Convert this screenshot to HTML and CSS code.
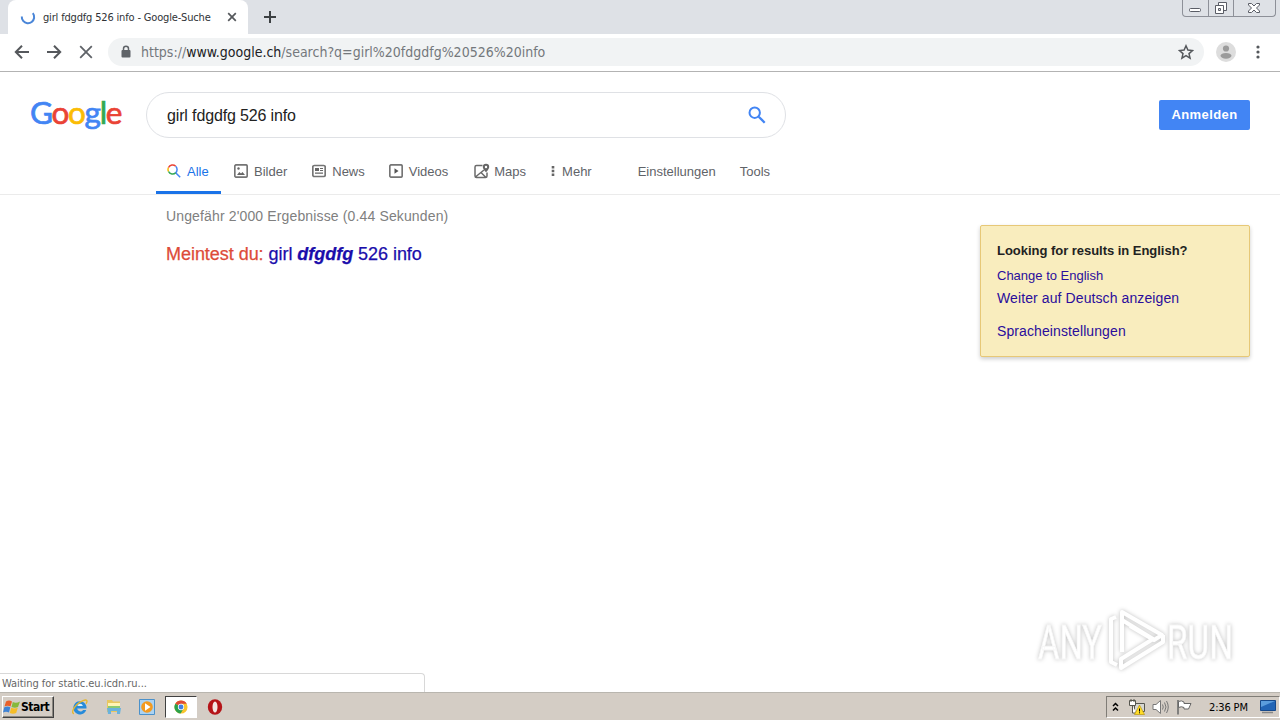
FILE: index.html
```html
<!DOCTYPE html>
<html lang="de">
<head>
	<meta charset="utf-8">
	<meta name="viewport" content="width=device-width, initial-scale=1">
	<title>girl fdgdfg 526 info - Google-Suche</title>
	<link rel="stylesheet" href="styles.css">
</head>
<body>
<!-- browser tabs and window buttons -->
<div class="tabstrip">
	<div class="tab">
		<svg class="spinner" viewBox="0 0 16 16" width="16" height="16"><path d="M1.800 7.500a6.200 6.200 0 0 0 12.300 1.500q.300-2.800-1.300-4.800" fill="none" stroke="#4a86d8" stroke-width="2"/></svg>
		<span class="tab-title">girl fdgdfg 526 info - Google-Suche</span>
		<svg class="tab-close" viewBox="0 0 10 10" width="10" height="10"><path d="M1.2 1.2l7.6 7.6M8.8 1.2l-7.6 7.6" stroke="#55585c" stroke-width="1.7"/></svg>
	</div>
	<svg class="new-tab" viewBox="0 0 14 14" width="14" height="14"><path d="M7 1v12M1 7h12" stroke="#3c4043" stroke-width="2"/></svg>
	<div class="window-buttons">
		<span><svg viewBox="0 0 24 16" width="24" height="16"><rect x="6.5" y="8.5" width="11" height="3" rx="1" fill="#fff" stroke="#5a5d66"/></svg></span>
		<span><svg viewBox="0 0 24 16" width="24" height="16"><path d="M9.500 2.500h8v8h-8z" fill="#fff" stroke="#5a5d66"/><path d="M6.500 5.500h8v8h-8z" fill="#fff" stroke="#5a5d66"/><path d="M9.500 8.500h2v2h-2z" fill="#dee1e6" stroke="#5a5d66"/></svg></span>
		<span class="wide"><svg viewBox="0 0 40 16" width="40" height="16"><path d="M14.500 3.500h3l2.500 2.500 2.500-2.500h3v1.500l-3 3 3 3v1.500h-3l-2.500-2.500-2.500 2.500h-3v-1.500l3-3-3-3z" fill="#fff" stroke="#5a5d66"/></svg></span>
	</div>
</div>

<div class="toolbar">
	<svg class="nav-icon" viewBox="0 0 16 16" width="16" height="16"><path d="M15 8H2.500M8 1.800L1.800 8 8 14.200" fill="none" stroke="#55585c" stroke-width="2"/></svg>
	<svg class="nav-icon" viewBox="0 0 16 16" width="16" height="16"><path d="M1 8h12.500M8 1.800L14.200 8 8 14.200" fill="none" stroke="#55585c" stroke-width="2"/></svg>
	<svg class="nav-icon" viewBox="0 0 16 16" width="16" height="16"><path d="M2.200 2.200l11.600 11.600M13.800 2.200L2.200 13.800" stroke="#5f6368" stroke-width="1.800"/></svg>
	<div class="omnibox">
		<svg class="lock" viewBox="0 0 10 14" width="10" height="14"><path d="M2.500 6V3.700a2.500 2.500 0 0 1 5 0V6" fill="none" stroke="#5f6368" stroke-width="1.500"/><rect x="0.500" y="5" width="9" height="7.500" rx="1" fill="#5f6368"/></svg>
		<span class="url"><span>https://</span><b>www.google.ch</b><span class="path">/search?q=girl%20fdgdfg%20526%20info</span></span>
		<svg class="star" viewBox="0 0 16 16" width="16" height="16"><path d="M8 1.800l1.900 4.300 4.600.4-3.500 3.100 1.050 4.500L8 11.700l-4.050 2.400L5 9.600 1.500 6.500l4.600-.4z" fill="none" stroke="#55585c" stroke-width="1.500"/></svg>
	</div>
	<svg class="avatar" viewBox="0 0 20 20" width="20" height="20"><circle cx="10" cy="10" r="10" fill="#dddddd"/><circle cx="10" cy="6.500" r="3.100" fill="#9b9b9b"/><ellipse cx="10" cy="13.800" rx="5.500" ry="2.900" fill="#9b9b9b"/></svg>
	<svg class="menu" viewBox="0 0 4 14" width="4" height="14"><g fill="#55585c"><circle cx="2" cy="2" r="1.600"/><circle cx="2" cy="7" r="1.600"/><circle cx="2" cy="12" r="1.600"/></g></svg>
</div>

<!-- search page -->
<header class="search-header">
	<div class="logo"><span class="blue">G</span><span class="red">o</span><span class="yellow">o</span><span class="blue">g</span><span class="green">l</span><span class="red">e</span></div>
	<div class="search-box">
		<span class="query">girl fdgdfg 526 info</span>
		<svg viewBox="0 0 18 18" width="18" height="18"><circle cx="6.700" cy="6.700" r="5.200" fill="none" stroke="#4285f4" stroke-width="2"/><path d="M10.700 10.700l6 6" stroke="#4285f4" stroke-width="2.300"/></svg>
	</div>
	<div class="login">Anmelden</div>
</header>

<nav class="tabs">
	<div class="item active">
		<svg viewBox="0 0 14 14" width="14" height="14"><g fill="none" stroke-width="1.500"><path d="M1.500 7.500A4.500 4.500 0 0 1 1.500 3.500" stroke="#fbbc05"/><path d="M1.500 3.500A4.500 4.500 0 0 1 8.700 2.200" stroke="#ea4335"/><path d="M8.700 2.200A4.500 4.500 0 0 1 8.700 8.700L13.200 13.200" stroke="#4285f4"/><path d="M8.700 8.700A4.500 4.500 0 0 1 1.500 7.500" stroke="#34a853"/></g></svg>
		<span>Alle</span>
	</div>
	<div class="item">
		<svg viewBox="0 0 14 14" width="14" height="14"><rect x="0.800" y="0.800" width="12.400" height="12.400" rx="1.500" fill="none" stroke="#757575" stroke-width="1.700"/><path d="M3 11l2.300-3 1.700 1.500L8.500 8 11 11z" fill="#666"/><circle cx="4.500" cy="4.500" r="1.200" fill="#666"/></svg>
		<span>Bilder</span>
	</div>
	<div class="item">
		<svg viewBox="0 0 14 14" width="14" height="14"><rect x="0.800" y="1.500" width="12.400" height="11" rx="1.500" fill="none" stroke="#757575" stroke-width="1.700"/><path d="M3 4h4v3H3zM8 4h3v1H8zM8 6h3v1H8zM3 8.500h8v1.200H3z" fill="#666"/></svg>
		<span>News</span>
	</div>
	<div class="item videos">
		<svg viewBox="0 0 14 14" width="14" height="14"><rect x="0.800" y="0.800" width="12.400" height="12.400" rx="1.500" fill="none" stroke="#757575" stroke-width="1.700"/><path d="M5.500 4.200L9.500 7l-4 2.800z" fill="#555"/></svg>
		<span>Videos</span>
	</div>
	<div class="item">
		<svg class="maps" viewBox="0 0 16 16" width="16" height="16"><path d="M8.500 2.500h-6a1.500 1.500 0 0 0-1.500 1.500v9a1.500 1.500 0 0 0 1.500 1.500h9a1.500 1.500 0 0 0 1.500-1.500V9.500M2 13.500l8-6.500M7 9.500l4.500 4.500" fill="none" stroke="#6b6b6b" stroke-width="1.500"/><path d="M12 .8a3.200 3.200 0 0 1 3.200 3.200c0 2.200-3.200 5.200-3.200 5.200S8.800 6.200 8.800 4A3.200 3.200 0 0 1 12 .8z" fill="#666"/><circle cx="12" cy="4" r="1.200" fill="#fff"/></svg>
		<span>Maps</span>
	</div>
	<div class="item more">
		<svg viewBox="0 0 4 12" width="4" height="12"><path d="M.700 1h2.600v2.400H.700zM.700 4.800h2.600v2.400H.700zM.700 8.600h2.600V11H.700z" fill="#666"/></svg>
		<span>Mehr</span>
	</div>
	<div class="item settings"><span>Einstellungen</span></div>
	<div class="item tools"><span>Tools</span></div>
</nav>

<main class="results">
	<section>
		<p class="stats">Ungefähr 2'000 Ergebnisse (0.44 Sekunden)</p>
		<p class="spell"><span>Meintest du:</span> <a>girl <b>dfgdfg</b> 526 info</a></p>
	</section>
	<aside class="language">
		<h2>Looking for results in English?</h2>
		<a class="change">Change to English</a>
		<a class="keep">Weiter auf Deutsch anzeigen</a>
		<a class="prefs">Spracheinstellungen</a>
	</aside>
</main>

<!-- overlays: watermark and the loading status -->
<svg class="watermark" viewBox="0 0 256 80" width="256" height="80">
	<g font-family="Roboto" font-size="49" fill="#fff" stroke="#f7f7f7" stroke-width="0.800">
		<text x="18" y="59" textLength="64" lengthAdjust="spacingAndGlyphs">ANY</text>
		<text x="147" y="59" textLength="66" lengthAdjust="spacingAndGlyphs">RUN</text>
	</g>
	<g fill="none" stroke="#fff" stroke-width="4" stroke-linejoin="round">
		<path d="M102 52V12l40 23-8 5-24-14M96 17l-5 2v43l6 3M102 52v-32l31 19-32 20v9l42-26v-7"/>
	</g>
</svg>
<div class="status">Waiting for static.eu.icdn.ru...</div>

<footer class="taskbar">
	<div class="start">
		<svg viewBox="0 0 18 16" width="18" height="16"><path d="M3 2.500Q6 .500 9 2.500L7.500 7.500Q4.500 6 1.500 7.500z" fill="#e9602a"/><path d="M9.800 3Q13 4.600 17 2.500L15 8Q12 9.500 8.500 8z" fill="#86b93b"/><path d="M1.300 8.300Q4.500 6.700 7.300 8.300L6 13.500Q3 12 0 13.500z" fill="#3f83d5"/><path d="M8.200 8.800Q11.500 10.300 14.800 8.800L13.200 14Q10 15.500 6.800 14z" fill="#f6bd27"/></svg>
		<b>Start</b>
	</div>
	<div class="quick"><svg viewBox="0 0 16 16" width="16" height="16"><path d="M14.500 9.500H5.200a3.200 3.200 0 0 0 5.900 1.400h3.100A6.600 6.600 0 1 1 14.500 9.500z" fill="#278bda"/><path d="M5.300 7h5.600A2.900 2.900 0 0 0 5.300 7z" fill="#d9f0ff"/><path d="M2 14.500C-.500 14.500.500 10 4.500 6S14.500-.500 15 2c.200 1-.500 2-1 2.800" fill="none" stroke="#e5b72f" stroke-width="1.300"/></svg></div>
	<div class="quick"><svg viewBox="0 0 16 16" width="16" height="16"><path d="M1 1h5l1 1.500h7V13H1z" fill="#e8c75f"/><path d="M2 4h12v6H2z" fill="#fff4b5"/><path d="M2 7h12v3H2z" fill="#8cca72"/><path d="M1 9h14l-1 6h-3v-3H5v3H2z" fill="#69b2dd"/></svg></div>
	<div class="quick"><svg viewBox="0 0 16 16" width="16" height="16"><path d="M.500.500h15v15H.500z" fill="#abd2f2" stroke="#4b91ca"/><circle cx="8" cy="8" r="5.800" fill="#f39a20"/><path d="M6 4.300L11.500 8 6 11.700z" fill="#fff"/></svg></div>
	<div class="quick pressed"><svg viewBox="0 0 16 16" width="14" height="14"><circle cx="8" cy="8" r="7.500" fill="#f9c52d"/><path d="M8 8L1.500 4.200A7.500 7.500 0 0 1 14.500 4.200H8z" fill="#df4a36"/><path d="M8 8L1.500 4.200A7.500 7.500 0 0 0 7.500 15.500L11 9.800z" fill="#2ba14b"/><circle cx="8" cy="8" r="3.600" fill="#fff"/><circle cx="8" cy="8" r="2.800" fill="#427fe1"/></svg></div>
	<div class="quick"><svg viewBox="0 0 16 16" width="16" height="16"><ellipse cx="8" cy="8" rx="7.200" ry="7.800" fill="#b51418"/><ellipse cx="8" cy="8" rx="2.500" ry="5.500" fill="#f3e7e3"/></svg></div>
	<div class="tray">
		<svg class="chevrons" viewBox="0 0 7 10" width="7" height="10"><path d="M1 4l2.500-2.500L6 4M1 8.500L3.500 6 6 8.500" fill="none" stroke="#000" stroke-width="1.500"/></svg>
		<svg class="network" viewBox="0 0 16 16" width="16" height="16"><path d="M5.500 4.500h10v8h-10z" fill="#d7d7d2" stroke="#56564f"/><path d="M.500 1.500h6v5h-6zM3.500 6.500V14h4M2 0v3M5 0v3" fill="#fff" stroke="#56564f"/><path d="M10.500 6l5 9.500h-10z" fill="#ffdc28" stroke="#b28d00" stroke-width=".600"/><path d="M10.500 9.500v3M10.500 13.300v1" stroke="#000"/></svg>
		<svg class="sound" viewBox="0 0 17 16" width="17" height="16"><path d="M1 5.500h3L8.500 1.500v13L4 10.500H1z" fill="#fff" stroke="#777"/><path d="M10.500 5.500q1.500 2.500 0 5M12.500 3.500q3 4.500 0 9M14.500 2q3.500 6 0 12" fill="none" stroke="#777"/></svg>
		<svg class="flag" viewBox="0 0 17 16" width="17" height="16"><path d="M2 1v14.500" stroke="#666" stroke-width="1.500"/><path d="M2.500 2.500q3-1.500 5.500.500v1.500h7L12.500 10H8V8.500q-2.500-1.500-5.500 0z" fill="#fff" stroke="#666"/></svg>
		<span class="clock">2:36 PM</span>
		<svg class="desktop" viewBox="0 0 16 14" width="16" height="14"><path d="M.500.500h15v10H.500z" fill="#2265b6" stroke="#16498b"/><path d="M1 1h14L1 7z" fill="#5b9ddd"/><path d="M2 12.500h11" stroke="#888" stroke-width="1.500"/></svg>
	</div>
</footer>
</body>
</html>
```
FILE: styles.css
```css
* {
  box-sizing: border-box;
  padding: 0;
  margin: 0;
}
body {
  width: 1280px;
  height: 720px;
  overflow: hidden;
  position: relative;
  display: flex;
  flex-direction: column;
  background: #fff;
  color: #222;
  font-family: "Liberation Sans", Arial, sans-serif;
  white-space: nowrap;
}
svg {
  display: block;
  flex: none;
}

/* browser */
.tabstrip {
  height: 34px;
  flex: none;
  display: flex;
  padding-left: 8px;
  background: #dee1e6;
}
.tab {
  width: 240px;
  height: 34px;
  display: flex;
  align-items: center;
  padding: 0 11px 0 12px;
  border-radius: 8px 8px 0 0;
  background: #fff;
}
.tab-title {
  margin-left: 7px;
  color: #303236;
  font: 11px "DejaVu Sans Condensed", "DejaVu Sans", sans-serif;
  letter-spacing: -0.17px;
}
.tab-close {
  margin-left: auto;
}
.new-tab {
  margin: 10px 0 0 15px;
}
.window-buttons {
  height: 17px;
  display: flex;
  margin-left: auto;
  margin-right: 4px;
  border: 1px solid #8d9098;
  border-top: 0;
  border-radius: 0 0 4px 4px;
}
.window-buttons span {
  width: 25px;
}
.window-buttons span + span {
  border-left: 1px solid #8d9098;
}
.window-buttons .wide {
  width: 42px;
}
.toolbar {
  height: 38px;
  flex: none;
  display: flex;
  align-items: center;
  padding: 0 20px 2px 14px;
  border-bottom: 1px solid #b3b3b3;
}
.nav-icon {
  margin-right: 16px;
}
.omnibox {
  width: 1096px;
  height: 28px;
  display: flex;
  align-items: center;
  margin-left: -2px;
  padding: 0 10px 0 13px;
  border-radius: 14px;
  background: #f1f3f4;
}
.url {
  margin-left: 10px;
  color: #74787c;
  font: 14px "DejaVu Sans Condensed", "DejaVu Sans", sans-serif;
  letter-spacing: 0;
}
.url b {
  color: #202124;
  font-weight: normal;
}
.star {
  margin-left: auto;
}
.avatar {
  margin-left: 12px;
}
.menu {
  margin-left: auto;
}

/* search header */
.search-header {
  height: 78px;
  flex: none;
  display: flex;
  align-items: flex-start;
  padding: 20px 30px 0;
}
.logo {
  width: 116px;
  font: 31.5px/40px Lato, sans-serif;
  letter-spacing: -1.3px;
  -webkit-text-stroke: 0.7px currentColor;
}
.blue { color: #4285f4; }
.red { color: #ea4335; }
.yellow { color: #fbbc05; }
.green { color: #34a853; }
.search-box {
  width: 640px;
  height: 46px;
  display: flex;
  align-items: center;
  justify-content: space-between;
  padding: 0 19px 0 20px;
  border: 1px solid #dfe1e5;
  border-radius: 23px;
}
.query {
  padding-top: 2px;
  font-size: 16px;
  letter-spacing: -0.14px;
}
.login {
  width: 91px;
  height: 30px;
  margin: 8px 0 0 auto;
  border-radius: 2px;
  background: #4285f4;
  color: #fff;
  font: bold 13px/30px "Liberation Sans", Arial, sans-serif;
  letter-spacing: 0.4px;
  text-align: center;
}
.tabs {
  height: 45px;
  flex: none;
  display: flex;
  padding-left: 156px;
  border-bottom: 1px solid #ebebeb;
  color: #5f6368;
  font-size: 13px;
}
.item {
  height: 44px;
  display: flex;
  align-items: center;
  gap: 6px;
  padding: 0 0 2px 13px;
}
.item + .item {
  padding-right: 12px;
}
.item.active {
  width: 65px;
  padding: 1px 0 0 11px;
  border-bottom: 3px solid #1a73e8;
  color: #1a73e8;
}
.item.videos {
  margin-left: -1px;
  padding-right: 13px;
}
.maps {
  margin-right: -2px;
}
.item.more {
  gap: 7px;
}
.item.settings {
  padding-left: 34px;
}
.item.tools {
  padding-left: 12px;
}

/* results */
.results {
  flex: 1;
  display: flex;
  justify-content: space-between;
  align-items: flex-start;
  padding: 0 30px 0 166px;
}
.stats {
  margin-top: 13px;
  color: #808080;
  font-size: 14px;
  line-height: 17px;
  letter-spacing: 0.14px;
}
.spell {
  margin-top: 18px;
  font-size: 18px;
  line-height: 22px;
  letter-spacing: -0.04px;
  -webkit-text-stroke: 0.25px currentColor;
}
.spell span {
  color: #dd4b39;
}
.spell a {
  color: #1a0dab;
}
.spell b {
  font-style: italic;
}
.language {
  width: 270px;
  height: 132px;
  display: flex;
  flex-direction: column;
  margin-top: 30px;
  padding: 16px 16px 0;
  border: 1px solid #e7c877;
  border-radius: 2px;
  background: #f9edbe;
  box-shadow: 0 2px 4px rgba(0, 0, 0, 0.2);
  color: #2a0d9c;
  font-size: 14px;
  line-height: 17px;
}
.language h2 {
  color: #222;
  font-size: 13px;
  line-height: 17px;
  letter-spacing: -0.03px;
}
.change {
  margin-top: 8px;
  font-size: 13px;
}
.keep {
  margin-top: 6px;
  letter-spacing: 0.1px;
}
.prefs {
  margin-top: 16px;
  letter-spacing: 0.1px;
}

/* overlays */
.watermark {
  position: absolute;
  top: 600px;
  left: 1020px;
  filter: drop-shadow(0 0 2px rgba(0, 0, 0, 0.25));
}
.status {
  position: absolute;
  left: 0;
  bottom: 28px;
  width: 425px;
  height: 19px;
  padding-left: 2px;
  border: 1px solid #d8d8d8;
  border-left: 0;
  border-bottom: 0;
  border-radius: 0 4px 0 0;
  background: #fff;
  color: #666;
  font: 11px/20px "DejaVu Sans Condensed", "DejaVu Sans", sans-serif;
  letter-spacing: -0.05px;
}

/* taskbar */
.taskbar {
  height: 28px;
  flex: none;
  display: flex;
  align-items: center;
  border-top: 1px solid #b9b6af;
  background: #d4cdc5;
  color: #000;
  font: 11px "DejaVu Sans Condensed", "DejaVu Sans", sans-serif;
}
.start {
  width: 52px;
  height: 22px;
  display: flex;
  align-items: center;
  margin: 1px 10px 0 2px;
  border: 1px solid;
  border-color: #fff #404040 #404040 #fff;
  box-shadow: inset -1px -1px #8b8780;
}
.start b {
  font-size: 12px;
  letter-spacing: -0.5px;
}
.quick {
  width: 32px;
  height: 22px;
  display: flex;
  align-items: center;
  justify-content: center;
  margin-right: 1.7px;
}
.quick.pressed {
  background: #fff;
  border: 1px solid;
  border-color: #404040 #fff #fff #404040;
}
.tray {
  width: 174px;
  height: 22px;
  display: flex;
  align-items: center;
  margin-left: auto;
  padding-left: 5px;
  border: 1px solid;
  border-color: #807d77 #fff #fff #807d77;
}
.network {
  margin-left: 10px;
}
.sound {
  margin-left: 7px;
}
.flag {
  margin-left: 7px;
}
.clock {
  margin-left: 16px;
  padding-top: 1px;
  letter-spacing: -0.15px;
}
.desktop {
  margin-left: auto;
  margin-right: 3px;
}
```
